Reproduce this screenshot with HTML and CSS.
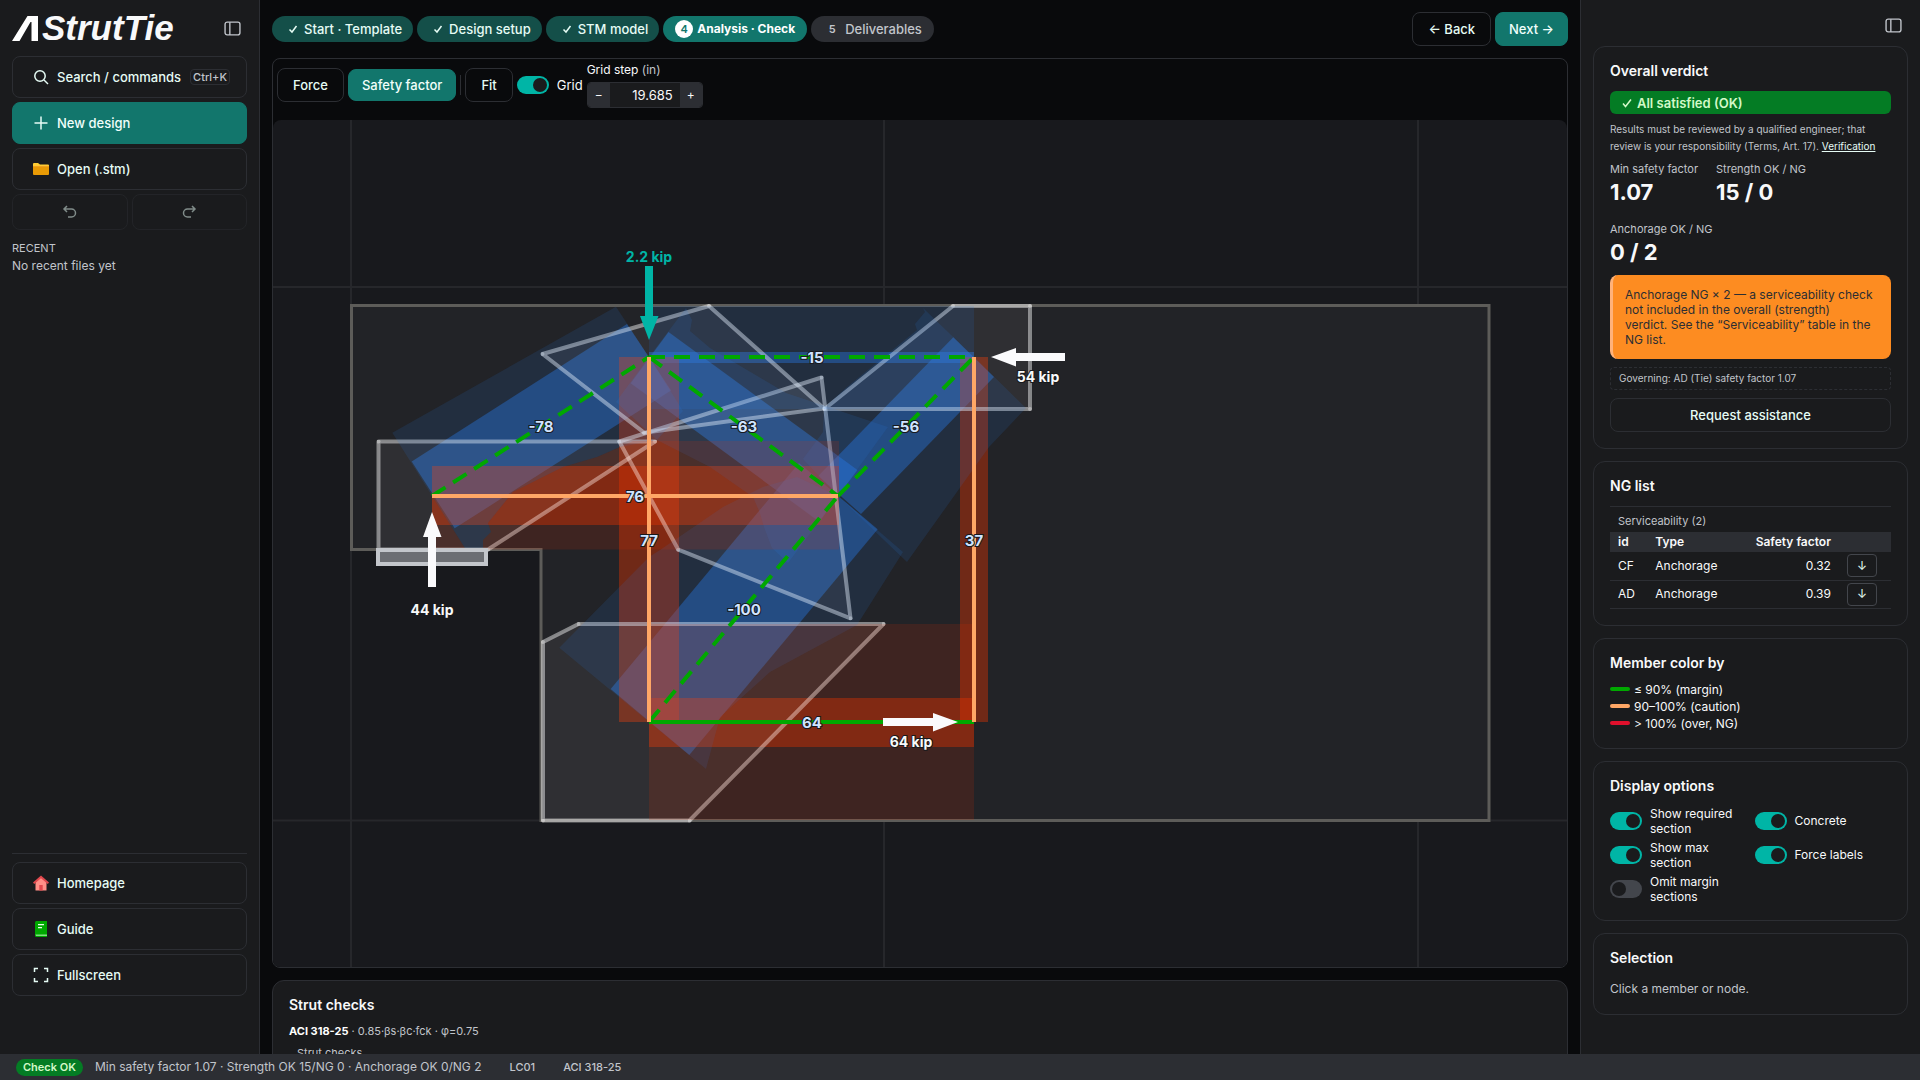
FILE: index.html
```html
<!DOCTYPE html>
<html lang="en">
<head>
<meta charset="utf-8">
<title>StrutTie</title>
<link rel="stylesheet" href="styles.css">
</head>
<body>
<div class="app">
  <aside class="sidebar">
    <div class="brand">
      <h1 class="logo"><svg class="logo-mark" viewBox="0 0 26 25" aria-hidden="true"><path d="M0 25 L15.500 0 H26 V25 H19.500 V6 H18.500 L7.500 25 Z"/></svg>StrutTie</h1>
      <button class="icon-btn" aria-label="Collapse sidebar"><svg viewBox="0 0 16 16"><rect x="1" y="2" width="14" height="12" rx="2"/><path d="M5.500 2v12"/></svg></button>
    </div>
    <button class="nav-btn"><svg class="ico" viewBox="0 0 16 16"><circle cx="7" cy="7" r="5.200"/><path d="M11 11l4 4"/></svg>Search / commands<kbd>Ctrl+K</kbd></button>
    <button class="nav-btn primary"><svg class="ico" viewBox="0 0 16 16"><path d="M8 1.500v13M1.500 8h13"/></svg>New design</button>
    <button class="nav-btn"><svg class="ico fill" viewBox="0 0 16 16"><path fill="#ffcc33" d="M0 3a1 1 0 0 1 1-1h4l2 1.500h8a1 1 0 0 1 1 1V8H0z"/><path fill="#f0a020" d="M0 5h16v2H0z"/><path fill="#e89a05" d="M0 6h16v7a1 1 0 0 1-1 1H1a1 1 0 0 1-1-1z"/></svg>Open (.stm)</button>
    <div class="history">
      <button class="nav-btn ghost" disabled aria-label="Undo"><svg class="ico" viewBox="0 0 16 16"><path d="M5 2L2 5l3 3M2 5h7.500a4 4 0 0 1 0 8H6"/></svg></button>
      <button class="nav-btn ghost" disabled aria-label="Redo"><svg class="ico" viewBox="0 0 16 16"><path d="M11 2l3 3-3 3M14 5H6.500a4 4 0 0 0 0 8H10"/></svg></button>
    </div>
    <div class="recent"><h2>RECENT</h2><p>No recent files yet</p></div>
    <div class="side-foot">
      <button class="nav-btn"><svg class="ico fill" viewBox="0 0 16 16"><path fill="#ff8f87" d="M2.500 7L8 2l5.500 5v8.500h-11z"/><path fill="#e0484d" d="M8 .5l8 7-1.200 1.500L8 3.200 1.200 9 0 7.500zM6.300 10h3.400v5.500H6.300z"/></svg>Homepage</button>
      <button class="nav-btn"><svg class="ico fill" viewBox="0 0 16 16"><path fill="#00a800" d="M2 1.500A1.500 1.500 0 0 1 3.500 0H14v16H3.500A1.500 1.500 0 0 1 2 14.500z"/><path fill="#7fe07f" d="M2.500 13.500H14V15H3z"/><path fill="#e9ffe9" d="M5 3h6v1.300H5zM5 6h4v1.300H5z"/></svg>Guide</button>
      <button class="nav-btn"><svg class="ico" viewBox="0 0 16 16"><path d="M1.500 5V1.500H5M11 1.500h3.500V5M14.500 11v3.500H11M5 14.500H1.500V11"/></svg>Fullscreen</button>
    </div>
  </aside>

  <main class="main">
    <header class="steps-row">
      <nav class="steps">
        <a class="step done" href="#"><svg class="tick" viewBox="0 0 10 10"><path d="M1.500 5.500l2.500 2.500 4.500-6"/></svg>Start · Template</a>
        <a class="step done" href="#"><svg class="tick" viewBox="0 0 10 10"><path d="M1.500 5.500l2.500 2.500 4.500-6"/></svg>Design setup</a>
        <a class="step done" href="#"><svg class="tick" viewBox="0 0 10 10"><path d="M1.500 5.500l2.500 2.500 4.500-6"/></svg>STM model</a>
        <a class="step current" href="#"><span class="num">4</span>Analysis · Check</a>
        <a class="step" href="#"><span class="num">5</span>Deliverables</a>
      </nav>
      <button class="btn">← Back</button>
      <button class="btn primary">Next →</button>
    </header>

    <section class="viewer">
      <div class="toolbar">
        <button class="btn">Force</button>
        <button class="btn primary slim">Safety factor</button>
        <span class="sep"></span>
        <button class="btn">Fit</button>
        <label class="switch-row"><input class="switch" type="checkbox" checked>Grid</label>
        <div class="step-field">
          <label for="grid-step">Grid step <span>(in)</span></label>
          <div class="stepper"><button aria-label="Decrease">−</button><input id="grid-step" type="text" value="19.685"><button aria-label="Increase">+</button></div>
        </div>
      </div>
      <svg class="canvas" viewBox="273 120 1294 847" preserveAspectRatio="xMidYMid slice">
        <defs>
          <marker id="dot" viewBox="-2 -2 4 4" markerWidth="4" markerHeight="4" markerUnits="userSpaceOnUse"><circle r="2" fill="#fff" fill-opacity=".35"/></marker>
        </defs>
        <path class="grid-line" d="M351 0V1080M884 0V1080M1418 0V1080M0 287H1920M0 820.500H1920"/>
        <path class="concrete" d="M351.500 305.500H1489V820.500H541V549.500H351.500Z"/>
        <g class="strut-req">
          <path d="M411.700 461.500L627 324L671 390.500L454.700 528.300Z"/>
          <path d="M649 352H974V363H649Z"/>
          <path d="M668.500 332L857.500 470L819.300 521.700L630.700 383.300Z"/>
          <path d="M953.300 337.300L994 377L861 514L818.300 476Z"/>
          <path d="M610.700 689L799 463L877.700 529.300L689.300 755Z"/>
        </g>
        <g class="tie-req">
          <path d="M432 466H839V525H432Z"/>
          <path d="M649 698H974V747H649Z"/>
          <path d="M619 357H679V722H619Z"/>
          <path d="M960 357H988V722H960Z"/>
        </g>
        <g class="zones">
          <path d="M378.500 441.500H655L488 549.500H378.500Z"/>
          <path d="M709 306L542.500 354L644 432.700L824 408.500Z"/>
          <path d="M953 306H1030V409H824.500Z"/>
          <path d="M619.300 441.500L821.500 377.500L850.500 618.300L678.300 549.700Z"/>
          <path d="M543 642L578.500 624H883.500L689.500 820.500H543Z"/>
        </g>
        <g class="strut-max">
          <path d="M392.300 432.700L616 306.700L649 357L683 411L657 440L620 447L597 457L563 467L513 492L488 523L491 532L483 540V549H465.500Z"/>
          <path d="M649 306H974V409H649Z"/>
          <path d="M649 357L686 308L692 320L690 331L710 348L786 393L888 427L838 496L788 563L772 548L764 527L760 513L753 497L710 467L657 440L616 402Z"/>
          <path d="M923 308L974 357L1026 408L989 447L907 562L838 496L803 459L823 432L824 408L847 387L917 330L915 324L925 312Z"/>
          <path d="M559.300 647.700L649 557L660 550L723 507L763 487L797 477L838 496L903 552L857 625L770 672L720 717L706 769Z"/>
        </g>
        <g class="tie-max">
          <path d="M483 549.500V540L491 532L488 523L513 492L563 467L597 457L620 447L633 441H839V549.500Z"/>
          <path d="M432 496L465.500 549H432Z"/>
          <path d="M649 624H974V820H649Z"/>
        </g>
        <path class="plate" d="M378 550H486V564H378Z"/>
        <g class="strut-line">
          <path d="M432 496L649 357"/><path d="M649 357H974"/><path d="M649 357L838 496"/><path d="M838 496L974 357"/><path d="M649 722L838 496"/>
        </g>
        <path class="tie-ok" d="M649 722H974"/>
        <path class="tie-warn" d="M649 357V722M432 496H838M974 357V722"/>
        <path class="arrow load" d="M645 266h8v50h5.500l-9.500 24-9-24h5z"/>
        <path class="arrow" d="M428 587h8v-50h5.500l-9.500-25-9 25h5z"/>
        <path class="arrow" d="M1065 353v8h-49v5.500l-25-9.500 25-9v5z"/>
        <path class="arrow" d="M883 718v8h50v5.500l25-9.500-25-9v5z"/>
        <g class="force-label">
          <text x="541" y="432">-78</text><text x="812" y="363">-15</text><text x="744" y="432">-63</text><text x="906" y="432">-56</text><text x="744" y="615">-100</text>
          <text x="635" y="502">76</text><text x="649" y="546">77</text><text x="974" y="546">37</text><text x="812" y="728">64</text>
        </g>
        <g class="load-label">
          <text class="teal" x="649" y="262">2.2 kip</text><text x="432" y="615">44 kip</text><text x="1038" y="382">54 kip</text><text x="911" y="747">64 kip</text>
        </g>
      </svg>
    </section>

    <section class="card checks">
      <h2>Strut checks</h2>
      <p class="formula"><b>ACI 318-25</b> · 0.85·βs·βc·fck · φ=0.75</p>
      <p class="caption">Strut checks</p>
    </section>
  </main>

  <aside class="panel">
    <div class="panel-head"><button class="icon-btn" aria-label="Collapse panel"><svg viewBox="0 0 16 16"><rect x="1" y="2" width="14" height="12" rx="2"/><path d="M5.500 2v12"/></svg></button></div>
    <section class="card verdict">
      <h2>Overall verdict</h2>
      <div class="ok-bar"><svg class="tick" viewBox="0 0 10 10"><path d="M1 5.500l2.500 3 5.500-7"/></svg>All satisfied (OK)</div>
      <p class="note">Results must be reviewed by a qualified engineer; that review is your responsibility (Terms, Art. 17). <a href="#">Verification</a></p>
      <dl class="metrics">
        <div><dt>Min safety factor</dt><dd>1.07</dd></div>
        <div><dt>Strength OK / NG</dt><dd>15 / 0</dd></div>
        <div><dt>Anchorage OK / NG</dt><dd>0 / 2</dd></div>
      </dl>
      <p class="warning">Anchorage NG × 2 — a serviceability check not included in the overall (strength) verdict. See the “Serviceability” table in the NG list.</p>
      <p class="governing">Governing: AD (Tie) safety factor 1.07</p>
      <button class="btn wide">Request assistance</button>
    </section>
    <section class="card ng">
      <h2>NG list</h2>
      <table>
        <caption>Serviceability (2)</caption>
        <thead><tr><th>id</th><th>Type</th><th class="r">Safety factor</th><th></th></tr></thead>
        <tbody>
          <tr><td>CF</td><td>Anchorage</td><td class="r">0.32</td><td><button class="go" aria-label="Go to CF">↓</button></td></tr>
          <tr><td>AD</td><td>Anchorage</td><td class="r">0.39</td><td><button class="go" aria-label="Go to AD">↓</button></td></tr>
        </tbody>
      </table>
    </section>
    <section class="card">
      <h2>Member color by</h2>
      <ul class="legend"><li class="ok">≤ 90% (margin)</li><li class="warn">90–100% (caution)</li><li class="over">&gt; 100% (over, NG)</li></ul>
    </section>
    <section class="card">
      <h2>Display options</h2>
      <div class="options">
        <label><input class="switch" type="checkbox" checked>Show required section</label>
        <label><input class="switch" type="checkbox" checked>Concrete</label>
        <label><input class="switch" type="checkbox" checked>Show max section</label>
        <label><input class="switch" type="checkbox" checked>Force labels</label>
        <label><input class="switch" type="checkbox">Omit margin sections</label>
      </div>
    </section>
    <section class="card">
      <h2>Selection</h2>
      <p class="hint">Click a member or node.</p>
    </section>
  </aside>
</div>
<footer class="status"><span class="badge">Check OK</span><span class="summary">Min safety factor 1.07 · Strength OK 15/NG 0 · Anchorage OK 0/NG 2</span><span class="tag">LC01</span><span class="tag">ACI 318-25</span></footer>
</body>
</html>
```
FILE: styles.css
```css
* { box-sizing: border-box; margin: 0; padding: 0; }
body { height: 100vh; display: flex; flex-direction: column; overflow: hidden; background: #090a0c; color: #f8f9fa; font: 12px/16px Inter, sans-serif; }
button, input { font: inherit; color: inherit; }
svg { display: block; flex: none; }
ul { list-style: none; }
a { color: inherit; }
h2 { font-size: 14px; line-height: 16px; font-weight: 600; }

.app { flex: 1; min-height: 0; display: grid; grid-template-columns: 260px minmax(0, 1fr) 340px; }

.sidebar { background: #1a1b1d; border-right: 1px solid #2c2e33; padding: 0 12px 58px; display: flex; flex-direction: column; gap: 4px; }
.brand { height: 52px; display: flex; align-items: center; justify-content: space-between; padding: 4px 6px 0 0; }
.logo { display: flex; align-items: center; font: italic bold 35px/32px "Liberation Sans", sans-serif; }
.logo-mark { width: 26px; height: 25px; fill: #fff; margin-right: 4px; }
.icon-btn { width: 17px; height: 17px; background: none; border: 0; }
.icon-btn svg { width: 17px; height: 17px; fill: none; stroke: #c1c5cb; stroke-width: 1.3; }
.nav-btn { height: 42px; display: flex; align-items: center; gap: 8px; padding: 0 16px 0 20px; background: none; border: 1px solid #2c2e33; border-radius: 8px; font-size: 13px; font-weight: 500; color: #e6fcf5; text-align: left; white-space: nowrap; }
.nav-btn.primary, .btn.primary { background: #12766c; border-color: #12766c; color: #f1fffb; }
.ico { width: 16px; height: 16px; fill: none; stroke: #e6fcf5; stroke-width: 1.5; }
.ico.fill { stroke: none; }
kbd { margin-left: auto; padding: 0 2px; border: 1px solid #2c2e33; border-radius: 4px; font: 500 11px/14px Inter, sans-serif; color: #c1c5cb; }
.history { display: grid; grid-template-columns: 1fr 1fr; gap: 4px; }
.nav-btn.ghost { height: 36px; justify-content: center; padding: 0; opacity: .5; }
.recent { padding-top: 6px; color: #c1c5cb; }
.recent h2 { font-size: 11px; line-height: 16px; font-weight: 400; }
.recent p { line-height: 20px; }
.side-foot { margin-top: auto; border-top: 1px solid #2c2e33; padding-top: 8px; display: flex; flex-direction: column; gap: 4px; }

.main { min-width: 0; min-height: 0; overflow: hidden; padding: 12px 12px 0; display: flex; flex-direction: column; gap: 12px; }
.steps-row { flex: none; display: flex; align-items: center; gap: 4px; }
.steps { display: flex; gap: 4px; margin-right: auto; }
.step { height: 26px; display: flex; align-items: center; gap: 4px; padding: 0 12px; border-radius: 13px; background: #2c2e33; color: #c1c5cb; text-decoration: none; font-size: 13px; font-weight: 500; }
.step.done { padding: 0 11px 0 12px; background: #144f49; color: #e6fcf5; }
.step.done .tick { margin: 0 2px 0 4px; }
.step.current { background: #12766c; color: #fff; font-size: 12px; font-weight: 700; }
.tick { width: 10px; height: 10px; fill: none; stroke: currentColor; stroke-width: 1.5; }
.num { width: 18px; height: 18px; border-radius: 9px; text-align: center; font-size: 11px; line-height: 18px; font-weight: 600; }
.current .num { background: #fff; color: #12766c; }
.btn { height: 34px; padding: 0 15px; background: none; border: 1px solid #2c2e33; border-radius: 8px; font-size: 13px; font-weight: 500; color: #e6fcf5; }
.btn.primary { padding: 0 13px; }
.btn.slim { height: 32px; }

.viewer { flex: none; height: 910px; display: flex; flex-direction: column; border: 1px solid #2c2e33; border-radius: 8px; overflow: hidden; }
.toolbar { height: 61px; padding: 0 4px 9px; display: flex; align-items: center; gap: 4px; }
.sep { width: 1px; height: 20px; background: #2c2e33; }
.switch-row { display: flex; align-items: center; gap: 8px; font-size: 13px; }
.switch { appearance: none; flex: none; width: 32px; height: 18px; border-radius: 9px; background: #43464c; padding: 2px; }
.switch::before { content: ""; display: block; width: 14px; height: 14px; border-radius: 7px; background: #1a1b1d; }
.switch:checked { background: #00b5a6; }
.switch:checked::before { margin-left: 14px; }
.step-field { line-height: 18px; align-self: flex-start; padding-top: 2px; }
.step-field span { color: #c1c5cb; }
.stepper { display: flex; width: 116px; height: 26px; margin-top: 3px; border: 1px solid #2c2e33; border-radius: 4px; overflow: hidden; }
.stepper button { width: 22px; background: #2c2e33; border: 0; }
.stepper input { flex: 1; min-width: 0; background: #1a1b1d; border: 0; text-align: right; padding-right: 7px; font-size: 13px; }
.canvas { width: 100%; flex: 1; min-height: 0; background: #18191d; border-radius: 8px 8px 0 0; }
.grid-line { stroke: #26272b; stroke-width: 2; fill: none; }
.concrete { fill: #222327; stroke: #5d5c59; stroke-width: 3; }
.zones path { fill: rgba(255, 255, 255, .06); stroke: rgba(255, 255, 255, .45); stroke-width: 4; stroke-linejoin: round; marker-start: url(#dot); marker-mid: url(#dot); }
.strut-max { fill: rgb(40, 120, 230); fill-opacity: .13; }
.strut-req { fill: rgb(40, 120, 230); fill-opacity: .4; }
.tie-max { fill: rgb(230, 50, 0); fill-opacity: .15; }
.tie-req { fill: rgb(230, 50, 0); fill-opacity: .4; }
.plate { fill: #6c6e73; stroke: #c3c6cb; stroke-width: 4; }
.strut-line { stroke: #00a800; stroke-width: 4; stroke-dasharray: 16 9; }
.tie-ok { stroke: #00a800; stroke-width: 4; }
.tie-warn { stroke: #ffa766; stroke-width: 4; fill: none; }
.arrow { fill: #fafafc; }
.arrow.load { fill: #00b5a6; }
.force-label, .load-label { font-weight: 700; text-anchor: middle; paint-order: stroke; stroke: #18191d; stroke-width: 2; }
.force-label { font-size: 15px; fill: #d0e4ff; }
.load-label { font-size: 14px; fill: #f8f9fa; }
.teal { fill: #00b5a6; }

.card { border: 1px solid #2c2e33; border-radius: 12px; padding: 16px; background: #1a1b1d; }
.checks { flex: none; }
.formula { font-size: 11px; margin-top: 10px; line-height: 16px; color: #c1c5cb; }
.formula b { color: #fff; }
.caption { font-size: 11px; margin-top: 6px; padding-left: 8px; color: #c1c5cb; }

.panel { min-height: 0; overflow: hidden; border-left: 1px solid #2c2e33; background: #1a1b1d; padding: 0 12px; display: flex; flex-direction: column; gap: 12px; }
.panel-head { flex: none; height: 34px; display: flex; justify-content: flex-end; align-items: flex-end; padding-right: 6px; }
.panel .card { flex: none; }
.ok-bar { display: flex; align-items: center; gap: 5px; height: 23px; margin-top: 12px; padding: 0 12px; border-radius: 6px; background: #047c24; color: #d3f9c8; font-size: 13px; font-weight: 600; }
.note { font-size: 10px; line-height: 17px; margin-top: 7px; color: #c1c5cb; }
.note a { color: #e6fcf5; }
.metrics { display: flex; flex-wrap: wrap; gap: 14px 18px; margin-top: 5px; }
dt { font-size: 11px; line-height: 18px; color: #c1c5cb; }
dd { font-size: 22px; line-height: 28px; font-weight: 700; }
.warning { margin-top: 9px; padding: 12px 16px 12px 12px; border-left: 3px solid #ffb27a; border-radius: 8px; background: #fd8c21; color: #2c2e33; line-height: 15px; }
.governing { margin: 8px 0; border: 1px dashed #2c2e33; border-radius: 4px; padding: 0 8px; font-size: 10px; line-height: 21px; color: #c1c5cb; }
.btn.wide { width: 100%; }
table { width: 100%; border-collapse: collapse; margin-top: 12px; }
caption { text-align: left; border-top: 1px solid #2c2e33; padding: 6px 8px 2px; font-size: 11px; line-height: 17px; color: #c1c5cb; }
th, td { text-align: left; padding: 0 8px; }
th { background: #2c2e33; height: 20px; font-weight: 600; }
td { height: 28px; border-bottom: 1px solid #2c2e33; }
.r { text-align: right; }
.go { display: block; width: 30px; height: 23px; background: none; border: 1px solid #43464c; border-radius: 4px; color: #e6fcf5; }
.legend { margin-top: 10px; line-height: 17px; }
.legend li { display: flex; align-items: center; gap: 4px; }
.legend li::before { content: ""; width: 20px; height: 4px; border-radius: 2px; background: #00a800; }
.legend .warn::before { background: #ffa766; }
.legend .over::before { background: #e0102c; }
.options { display: grid; grid-template-columns: 1fr 1fr; gap: 4px 8px; margin-top: 12px; line-height: 15px; }
.options label { display: flex; align-items: center; gap: 8px; }
.hint { margin-top: 14px; line-height: 18px; color: #c1c5cb; }

.status { flex: none; height: 26px; display: flex; align-items: center; padding: 0 16px; background: #2c2e33; color: #c1c5cb; }
.badge { height: 17px; padding: 0 7px; border-radius: 9px; background: #047c24; color: #d3f9c8; font-size: 11px; line-height: 17px; font-weight: 600; }
.summary { margin: 0 28px 0 12px; }
.tag { font-size: 11px; font-weight: 500; margin-right: 28px; }
```
